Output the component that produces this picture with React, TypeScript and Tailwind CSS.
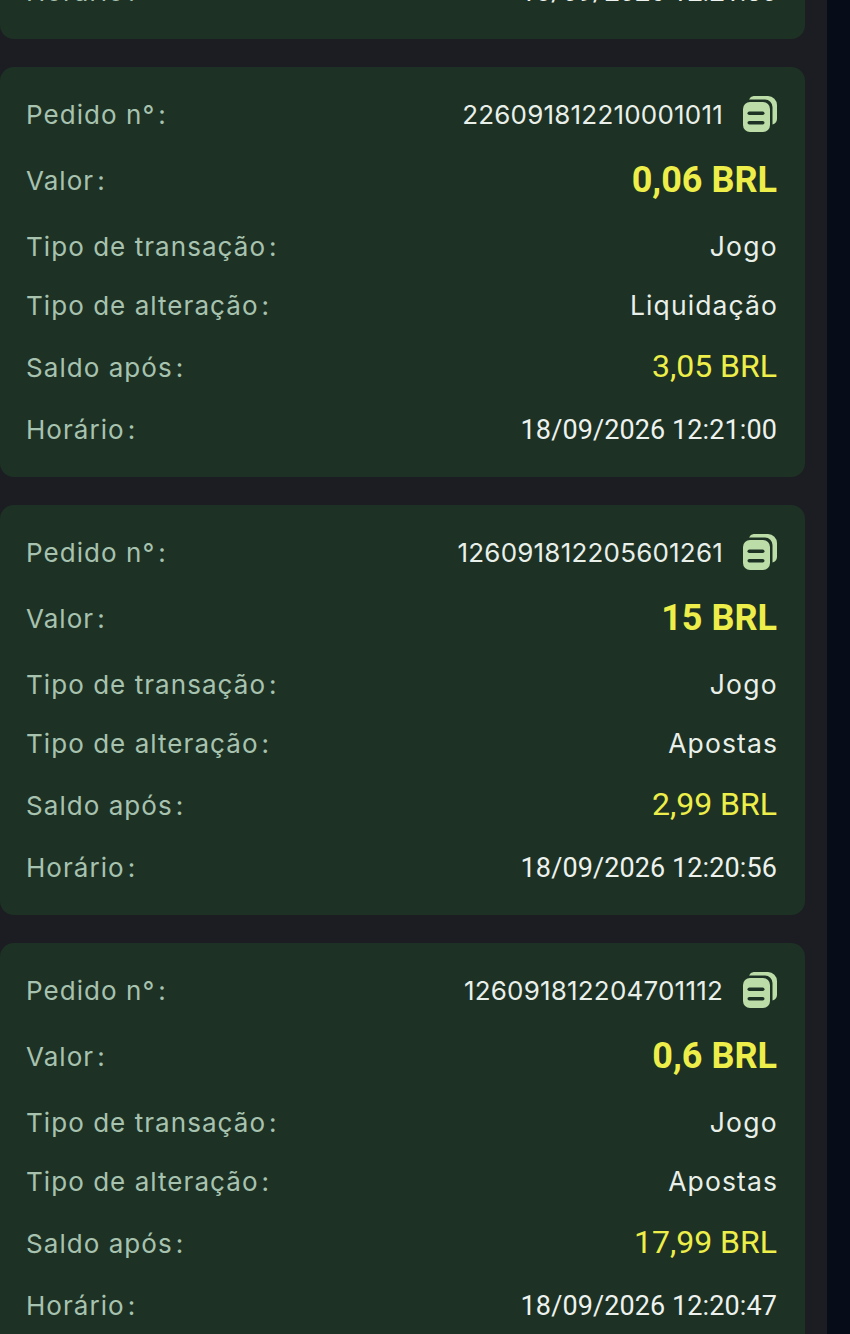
import React from 'react'

interface Order {
  id: string
  value: string
  change: string
  balance: string
  time: string
}

const orders: Order[] = [
  { id: '226091812213001034', value: '3 BRL', change: 'Apostas', balance: '2,99 BRL', time: '18/09/2026 12:21:30' },
  { id: '226091812210001011', value: '0,06 BRL', change: 'Liquidação', balance: '3,05 BRL', time: '18/09/2026 12:21:00' },
  { id: '126091812205601261', value: '15 BRL', change: 'Apostas', balance: '2,99 BRL', time: '18/09/2026 12:20:56' },
  { id: '126091812204701112', value: '0,6 BRL', change: 'Apostas', balance: '17,99 BRL', time: '18/09/2026 12:20:47' },
]

const labelFont = "font-['Inter','Noto_Sans',sans-serif]"
const numFont = "font-['Roboto','Noto_Sans',sans-serif]"

function CopyIcon() {
  return (
    <svg width="34" height="36" viewBox="0 0 34 36" className="ml-[20px] shrink-0">
      <path d="M6 3.5A6 6 0 0 1 12 0H25A9 9 0 0 1 34 9V23A6 6 0 0 1 29.5 28.5V11A7.5 7.5 0 0 0 22 3.5Z" fill="#bcdca8" />
      <rect x="0" y="6" width="27" height="30" rx="7" fill="#bcdca8" />
      <rect x="4.5" y="15.5" width="17" height="3.6" rx="1.8" fill="#1d3224" />
      <rect x="4.5" y="25" width="17" height="3.6" rx="1.8" fill="#1d3224" />
    </svg>
  )
}

function Row({ label, height, children }: { label: string; height: string; children: React.ReactNode }) {
  return (
    <div className={`flex items-center justify-between ${height}`}>
      <span className={`${labelFont} text-[26px] tracking-[1.05px] text-[#a8c2b0]`}>
        {label}
        <span className="ml-[3px]">:</span>
      </span>
      {children}
    </div>
  )
}

function OrderCard({ order }: { order: Order }) {
  return (
    <div className="h-[410px] rounded-[14px] bg-[#1d3224] pl-[26px] pr-[28px] pt-[14px]">
      <Row label="Pedido n°" height="h-[66px]">
        <div className="flex items-center">
          <span className={`${labelFont} text-[26px] tracking-[0.2px] text-[#e9efe9]`}>{order.id}</span>
          <CopyIcon />
        </div>
      </Row>
      <Row label="Valor" height="h-[66px]">
        <span className={`${numFont} text-[36px] font-bold text-[#eeee4a]`}>{order.value}</span>
      </Row>
      <Row label="Tipo de transação" height="h-[67px]">
        <span className={`${labelFont} mr-[-1px] text-[26.5px] tracking-[1.3px] text-[#e9efe9]`}>Jogo</span>
      </Row>
      <Row label="Tipo de alteração" height="h-[51px]">
        <span className={`${labelFont} mr-[-1px] text-[26.5px] tracking-[1.1px] text-[#e9efe9]`}>{order.change}</span>
      </Row>
      <Row label="Saldo após" height="h-[72px]">
        <span className={`${numFont} mb-[2px] text-[32px] text-[#eeee4a]`}>{order.balance}</span>
      </Row>
      <Row label="Horário" height="h-[53px]">
        <span className={`${numFont} mt-[2px] text-[27px] tracking-[0.1px] text-[#eef2ee]`}>{order.time}</span>
      </Row>
    </div>
  )
}

export default function App() {
  return (
    <div className="flex h-[1334px] w-[850px] overflow-hidden bg-[#060c18]">
      <div className="w-[827px] bg-[#1c1d22] pr-[22px]">
        <div className="mt-[-371px] flex flex-col gap-[28px]">
          {orders.map((o) => (
            <OrderCard key={o.id} order={o} />
          ))}
        </div>
      </div>
    </div>
  )
}
